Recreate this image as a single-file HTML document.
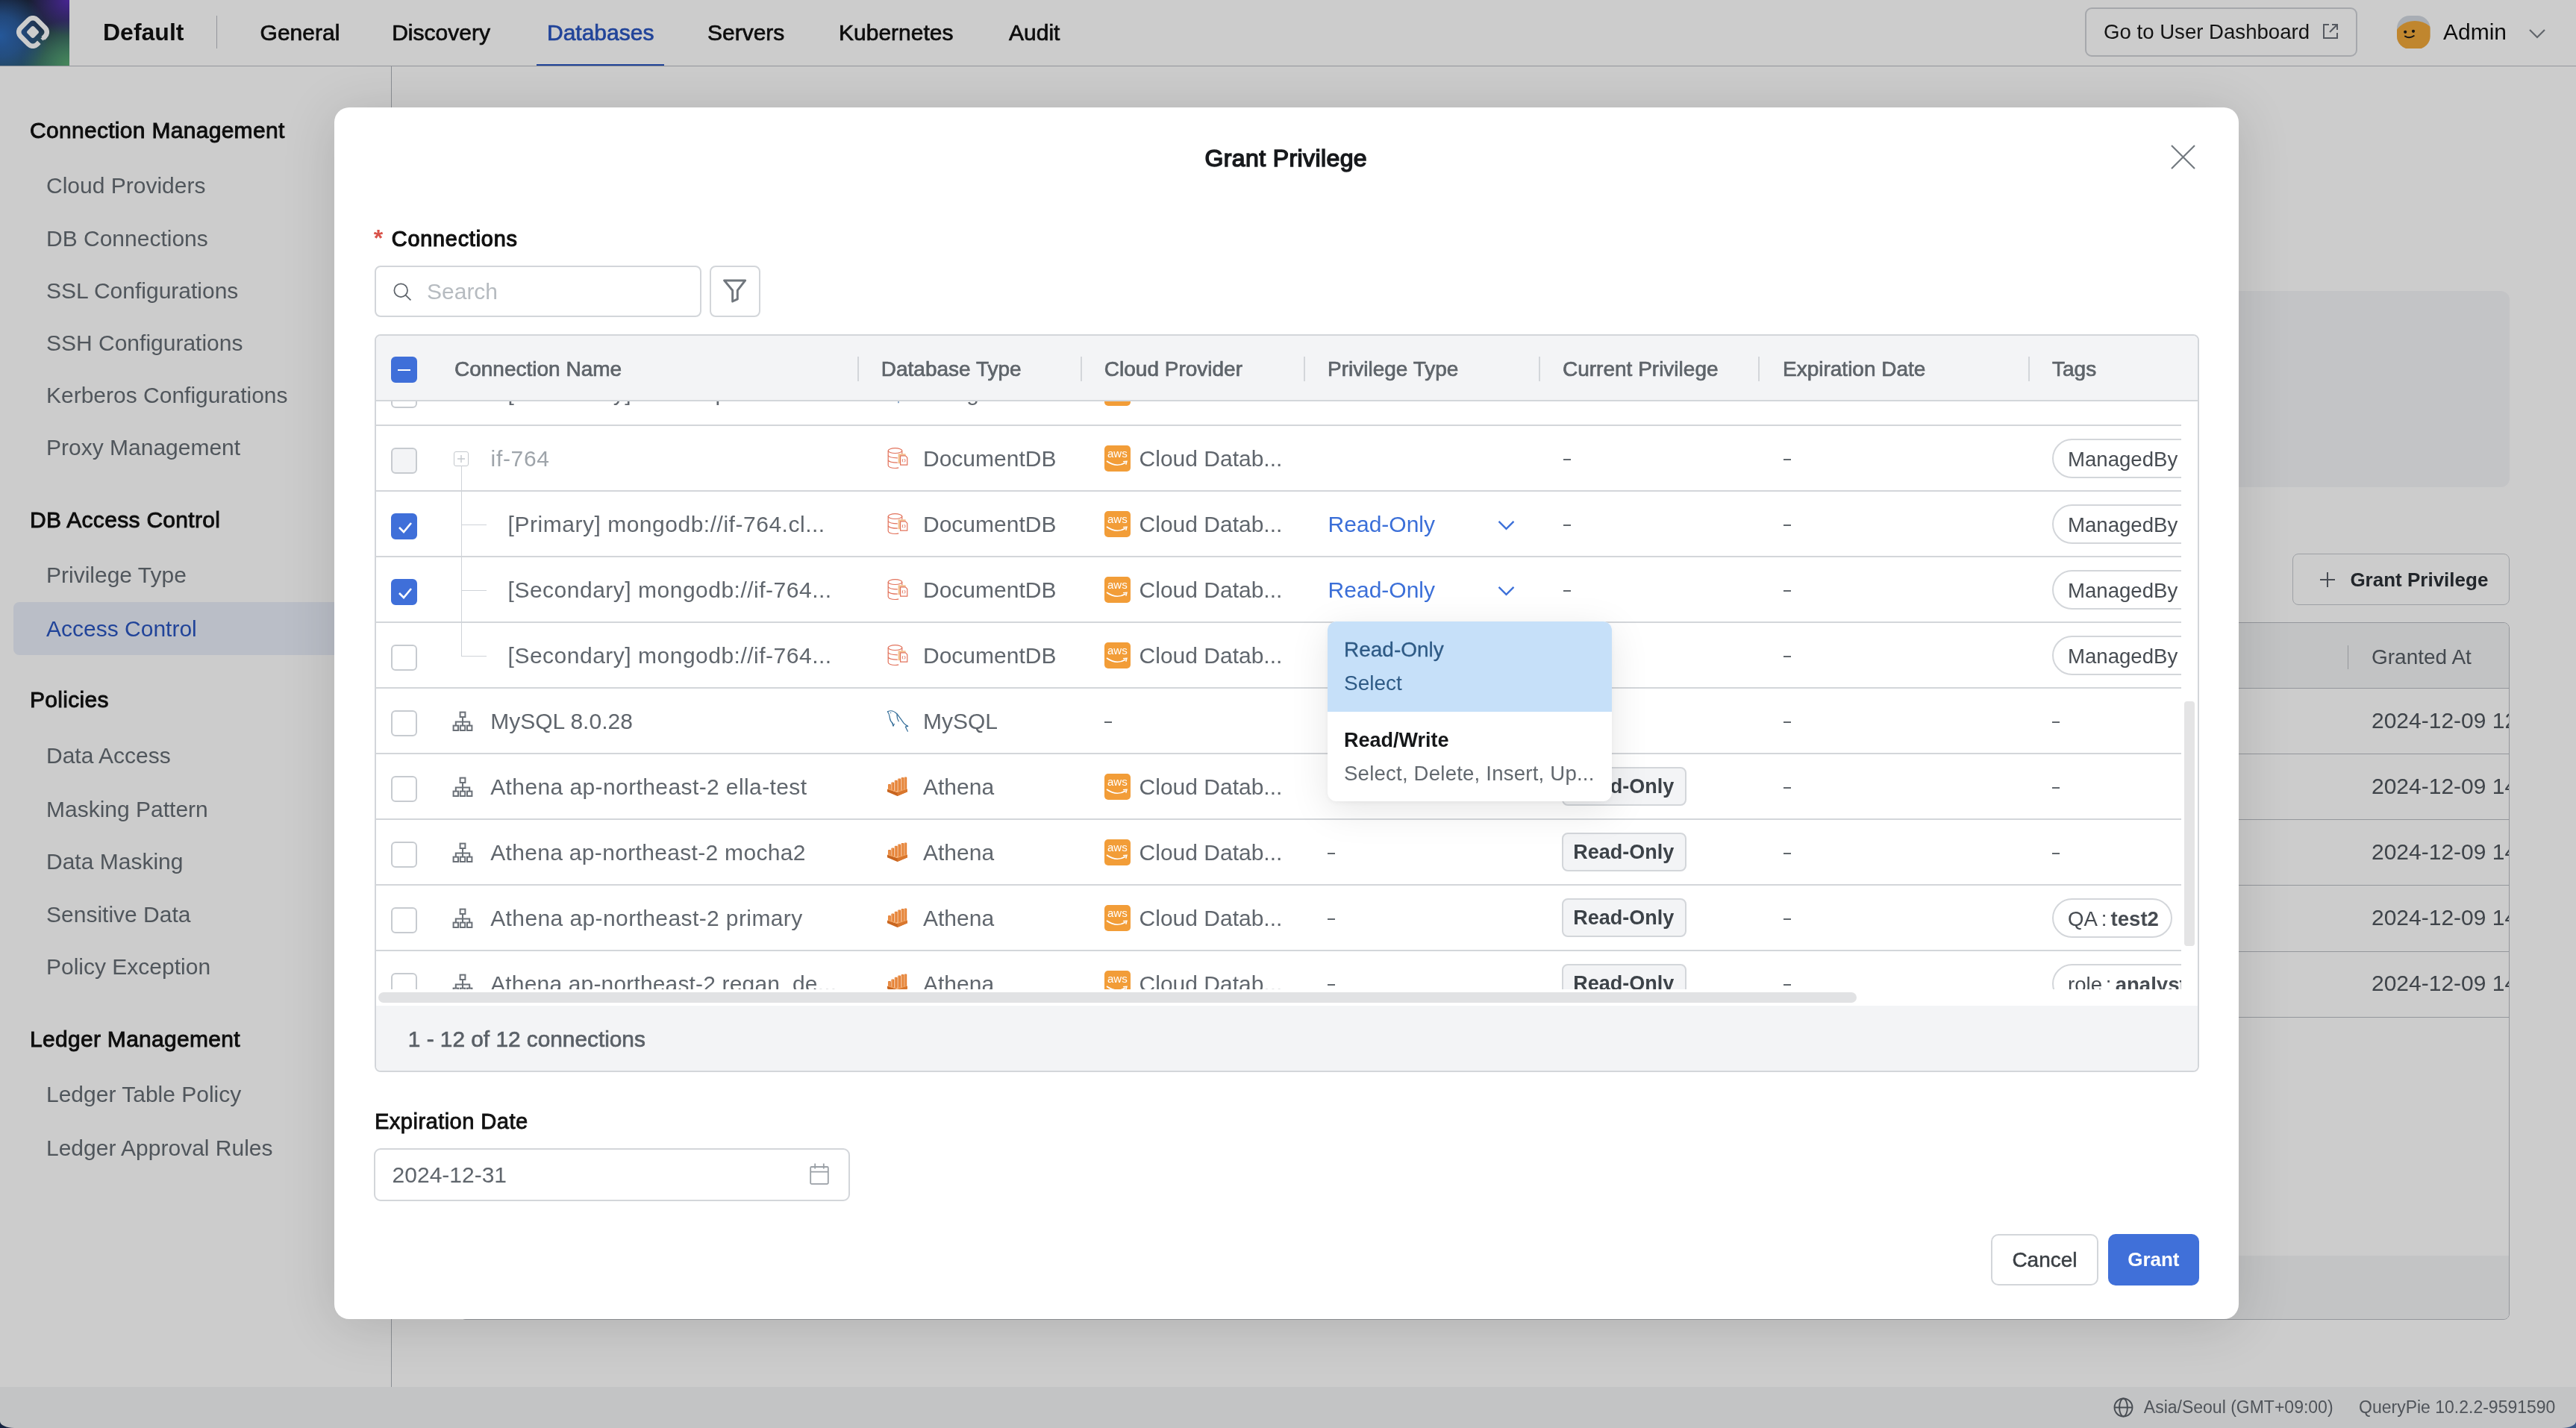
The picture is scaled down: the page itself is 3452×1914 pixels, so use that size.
<!DOCTYPE html>
<html><head><meta charset="utf-8"><title>Grant Privilege</title>
<style>
html{zoom:2}
*{box-sizing:border-box}
body{margin:0;width:1726px;height:957px;overflow:hidden;position:relative;font-family:"Liberation Sans",sans-serif;background:#fff;color:#111}
.abs{position:absolute}
.t{position:absolute;white-space:nowrap;line-height:1}
/* nav */
.nav{position:absolute;z-index:1;left:0;top:0;width:1726px;height:44.5px;border-bottom:0.5px solid #b8bcc4;background:#fff}
.logo{position:absolute;left:0;top:0;width:46.5px;height:44px;background:radial-gradient(ellipse 60% 55% at 100% 0%,#5a2fb8 0%,rgba(90,47,184,0.6) 40%,transparent 100%),radial-gradient(ellipse 70% 70% at 0% 55%,#2f6ec0 0%,rgba(47,110,192,0.7) 45%,transparent 100%),radial-gradient(ellipse 70% 70% at 100% 100%,#5aaa72 0%,rgba(90,170,114,0.6) 40%,transparent 100%),linear-gradient(160deg,#1a2238 0%,#253246 45%,#2f6a70 100%)}
.navi{position:absolute;top:13.5px;font-size:15px;color:#111;line-height:17px;-webkit-text-stroke:0.35px currentColor}
/* sidebar */
.side{position:absolute;left:0;top:0;width:262.5px;height:929.5px;border-right:0.5px solid #aeb3ba;background:#fff}
.sh{position:absolute;left:20px;font-size:15px;color:#111;letter-spacing:0.15px;-webkit-text-stroke:0.45px #111;line-height:17px}
.si{position:absolute;left:31px;font-size:15px;color:#656c73;line-height:17px}
/* status */
.status{position:absolute;left:0;top:929.5px;width:1726px;height:27.5px;background:#f4f5f7}
.bgd{left:1280.5px;font-size:15px;color:#4f565d}
.overlay{position:absolute;z-index:2;left:0;top:0;width:1726px;height:957px;background:rgba(0,0,0,0.2)}
/* modal */
.modal{position:absolute;z-index:3;left:224px;top:72px;width:1276px;height:812px;background:#fff;border-radius:10px;box-shadow:0 4px 36px rgba(0,0,0,0.14)}
.tbl{left:27px;top:152px;width:1222.5px;height:494.5px;border:1px solid #d3d6da;border-radius:4px;overflow:hidden}
.cbx{width:17.5px;height:17.5px;border:1px solid #c7cbd0;border-radius:3px;background:#fff}
.cbx.on{background:#3f6fd9;border-color:#3f6fd9}
.th{top:16.6px;font-size:14px;color:#5e646a;-webkit-text-stroke:0.35px #5e646a}
.dv{top:14.8px;width:1px;height:16.5px;background:#d3d6da}
.body{left:0;top:45px;width:1210.5px;height:394px;overflow:hidden}
.row{left:0;width:1210.5px;height:44px;border-bottom:1px solid #d3d6da}
.rt{font-size:15px;color:#60666d}
.blue{color:#3b6fd8}
.aws{left:488.9px;top:13px;width:17.5px;height:17.3px;border-radius:2.5px;background:#f29d38}
.pill{top:8.6px;width:100px;height:26.5px;border:1px solid #d3d6da;border-radius:13.25px;background:#fff}
.pill .t{font-size:13.8px;color:#474c52;left:9.7px !important;top:5.9px !important}
.badge{left:795.5px;top:8.7px;width:83.5px;height:26px;border:1px solid #d3d6da;border-radius:4px;background:#f3f4f6}
.badge .t{font-size:13.5px;font-weight:bold;color:#3c4248}
.dd{left:665.5px;top:344.5px;width:190.5px;height:120.5px;background:#fff;border-radius:6px;overflow:hidden;box-shadow:0 6px 26px rgba(0,0,0,0.10),0 1px 4px rgba(0,0,0,0.05)}
.modal,.side,.nav,.status,.bgc{will-change:transform}
.dash{top:21.8px;width:4.9px;height:1.35px;background:#62686e}
</style></head>
<body>
<!-- background page -->
<div class="nav">
  <div class="logo"><svg class="abs" style="left:10.9px;top:10.45px" width="22" height="22" viewBox="0 0 44 44"><defs><mask id="qm"><rect x="-5" y="-5" width="54" height="54" fill="#fff"/><path d="M27 39 L39 27" stroke="#000" stroke-width="0" /><path d="M26 26 L42 42" stroke="#000" stroke-width="7.5"/></mask></defs><g mask="url(#qm)"><rect x="6.36" y="6.36" width="31.28" height="31.28" rx="8" transform="rotate(45 22 22)" fill="none" stroke="#fff" stroke-width="6.6"/></g><path d="M38.2 26.4 L40.2 28.4 L35.6 33.6 L32.4 30.4Z" fill="#fff"/><rect x="15.6" y="15.6" width="12.8" height="12.8" rx="3" transform="rotate(45 22 22)" fill="#fff"/></svg></div>
  <div class="t" style="left:69px;top:13.6px;font-size:16px;font-weight:bold;color:#111">Default</div>
  <div class="abs" style="left:144.8px;top:10.5px;width:0.5px;height:22px;background:#b8bcc4"></div>
  <div class="t navi" style="left:174.3px">General</div>
  <div class="t navi" style="left:262.6px">Discovery</div>
  <div class="t navi" style="left:366.5px;color:#2a55c0">Databases</div>
  <div class="abs" style="left:359.5px;top:42.9px;width:85.5px;height:1.3px;background:#2a55c0"></div>
  <div class="t navi" style="left:474px">Servers</div>
  <div class="t navi" style="left:562px">Kubernetes</div>
  <div class="t navi" style="left:676px">Audit</div>
  <div class="abs" style="left:1397px;top:5px;width:182.5px;height:32.8px;border:1px solid #d0d3d8;border-radius:4.5px"></div>
  <div class="t" style="left:1409.5px;top:14.3px;font-size:13.8px;color:#1a1a1a">Go to User Dashboard</div>
  <svg class="abs" style="left:1555.5px;top:15px" width="12" height="12" viewBox="0 0 12 12"><path d="M5 1.5H1.5v9h9V7" fill="none" stroke="#6b7078" stroke-width="1"/><path d="M7 1.5h3.5V5M10.5 1.5L5.5 6.5" fill="none" stroke="#6b7078" stroke-width="1"/></svg>
  <svg class="abs" style="left:1606px;top:10.3px" width="22.3" height="22.3" viewBox="0 0 22.3 22.3"><defs><clipPath id="avc"><rect width="22.3" height="22.3" rx="8.5"/></clipPath></defs><g clip-path="url(#avc)"><rect width="22.3" height="22.3" fill="#d3d9e1"/><ellipse cx="12" cy="15.6" rx="14" ry="12.1" fill="#f1a83a"/><circle cx="5.6" cy="10.9" r="1.05" fill="#1a1a1a"/><circle cx="11" cy="10.4" r="1.05" fill="#1a1a1a"/><path d="M5.5 13.8Q8.4 15.6 11.4 13.5" fill="none" stroke="#1a1a1a" stroke-width="0.95" stroke-linecap="round"/></g></svg>
  <div class="t" style="left:1637px;top:14.2px;font-size:15px;color:#111">Admin</div>
  <svg class="abs" style="left:1694px;top:19px" width="12" height="7" viewBox="0 0 12 7"><path d="M1 1l5 5 5-5" fill="none" stroke="#7a8087" stroke-width="1.1"/></svg>
</div>
<div class="side">
  <div class="t sh" style="top:78.75px">Connection Management</div>
  <div class="t si" style="top:116.24px">Cloud Providers</div>
  <div class="t si" style="top:151.3px">DB Connections</div>
  <div class="t si" style="top:186.4px">SSL Configurations</div>
  <div class="t si" style="top:221.5px">SSH Configurations</div>
  <div class="t si" style="top:256.6px">Kerberos Configurations</div>
  <div class="t si" style="top:291.7px">Proxy Management</div>
  <div class="t sh" style="top:340.05px">DB Access Control</div>
  <div class="t si" style="top:377.2px">Privilege Type</div>
  <div class="abs" style="left:9px;top:403.5px;width:245px;height:35.5px;border-radius:4px;background:#e9eef9"></div>
  <div class="t si" style="top:412.9px;color:#2a55c0">Access Control</div>
  <div class="t sh" style="top:460.6px">Policies</div>
  <div class="t si" style="top:498.1px">Data Access</div>
  <div class="t si" style="top:533.8px">Masking Pattern</div>
  <div class="t si" style="top:568.8px">Data Masking</div>
  <div class="t si" style="top:604.4px">Sensitive Data</div>
  <div class="t si" style="top:639.3px">Policy Exception</div>
  <div class="t sh" style="top:687.9px">Ledger Management</div>
  <div class="t si" style="top:724.8px">Ledger Table Policy</div>
  <div class="t si" style="top:760.8px">Ledger Approval Rules</div>
</div>
<div class="abs bgc" style="left:0;top:0;width:1726px;height:957px">
<div class="abs" style="left:1050px;top:195px;width:631.5px;height:131.5px;border-radius:6px;background:#f4f5f8"></div>
<div class="abs" style="left:1536px;top:371px;width:145.5px;height:34.5px;border:0.5px solid #c5c9cf;border-radius:4px"></div>
<svg class="abs" style="left:1554px;top:383px" width="11" height="11" viewBox="0 0 11 11"><path d="M5.5 0.5v10M0.5 5.5h10" stroke="#5a6068" stroke-width="1"/></svg>
<div class="t" style="left:1574.7px;top:382px;font-size:13px;font-weight:bold;color:#2b3036">Grant Privilege</div>
<div class="abs" style="left:308px;top:417px;width:1373.5px;height:467.5px;border:0.5px solid #b9bdc4;border-radius:4px;overflow:hidden">
  <div class="abs" style="left:0;top:0;width:1400px;height:44px;background:#f3f4f6;border-bottom:0.5px solid #b9bdc4"></div>
  <div class="abs" style="left:1264.5px;top:15px;width:0.5px;height:16px;background:#b9bdc4"></div>
  <div class="t" style="left:1280.5px;top:16.2px;font-size:14px;color:#555c63">Granted At</div>
  <div class="abs" style="left:0;top:87.4px;width:1400px;height:0.5px;background:#b9bdc4"></div>
  <div class="abs" style="left:0;top:131.7px;width:1400px;height:0.5px;background:#b9bdc4"></div>
  <div class="abs" style="left:0;top:175.7px;width:1400px;height:0.5px;background:#b9bdc4"></div>
  <div class="abs" style="left:0;top:219.9px;width:1400px;height:0.5px;background:#b9bdc4"></div>
  <div class="abs" style="left:0;top:263.9px;width:1400px;height:0.5px;background:#b9bdc4"></div>
  <div class="t bgd" style="top:58.1px">2024-12-09 12:31</div>
  <div class="t bgd" style="top:102.1px">2024-12-09 14:02</div>
  <div class="t bgd" style="top:146.1px">2024-12-09 14:02</div>
  <div class="t bgd" style="top:190.1px">2024-12-09 14:02</div>
  <div class="t bgd" style="top:234.1px">2024-12-09 14:02</div>
  <div class="abs" style="left:0;top:423.8px;width:1400px;height:44px;background:#f4f5f7"></div>
</div>
</div>
<div class="status">
  <svg class="abs" style="left:1416px;top:7.2px" width="13.5" height="13.5" viewBox="0 0 14 14"><g fill="none" stroke="#5b6168" stroke-width="1"><circle cx="7" cy="7" r="6.2"/><ellipse cx="7" cy="7" rx="2.8" ry="6.2"/><path d="M0.8 7h12.4"/></g></svg>
  <div class="t" style="left:1436.4px;top:8.1px;font-size:11.5px;color:#646a71">Asia/Seoul (GMT+09:00)</div>
  <div class="t" style="left:1580.5px;top:8.1px;font-size:11.5px;color:#646a71">QueryPie 10.2.2-9591590</div>
</div>
<div class="overlay"></div>
<div class="modal">
  <div class="t" style="left:583.2px;top:26px;font-size:16px;letter-spacing:0.2px;-webkit-text-stroke:0.75px #17191c;color:#17191c">Grant Privilege</div>
  <svg class="abs" style="left:1230.5px;top:24.8px" width="16.5" height="16.5" viewBox="0 0 16.5 16.5"><path d="M0.5 0.5l15.5 15.5M16 0.5L0.5 16" stroke="#737a80" stroke-width="1.1"/></svg>
  <div class="t" style="left:26.4px;top:79.3px;font-size:16px;font-weight:bold;color:#d9534a">*</div>
  <div class="t" style="left:38.4px;top:81px;font-size:14.4px;color:#111;letter-spacing:0.4px;-webkit-text-stroke:0.6px #111">Connections</div>
  <div class="abs" style="left:27px;top:106px;width:219px;height:34.5px;border:1px solid #d3d6da;border-radius:4px"></div>
  <svg class="abs" style="left:39.5px;top:117.3px" width="12.5" height="12.5" viewBox="0 0 13 13"><circle cx="5.3" cy="5.3" r="4.6" fill="none" stroke="#5d636a" stroke-width="0.9"/><path d="M8.6 8.6l3.6 3.6" stroke="#5d636a" stroke-width="0.9"/></svg>
  <div class="t" style="left:62px;top:116.2px;font-size:15px;color:#b6bbc0">Search</div>
  <div class="abs" style="left:251.5px;top:106px;width:34px;height:34.5px;border:1px solid #d3d6da;border-radius:4px"></div>
  <svg class="abs" style="left:260.2px;top:114.6px" width="16.6" height="16.6" viewBox="0 0 17 17"><path d="M1.3 1.5h14.4L10.4 8.3v6l-3.4 1.6V8.3Z" fill="none" stroke="#70767d" stroke-width="1.5" stroke-linejoin="round"/></svg>
  <div class="abs tbl"><div class="abs" style="left:-1px;top:-1px;width:1222px;height:494.5px">
    <div class="abs" style="left:0;top:0;width:1223px;height:45px;background:#f3f4f6;border-bottom:1px solid #d3d6da"></div>
    <div class="abs cbx on" style="left:11px;top:15px"><div class="abs" style="left:3.5px;top:7.3px;width:8.5px;height:1.1px;background:#fff"></div></div>
    <div class="t th" style="left:53.5px">Connection Name</div>
    <div class="abs dv" style="left:323.6px"></div>
    <div class="t th" style="left:339.4px">Database Type</div>
    <div class="abs dv" style="left:473px"></div>
    <div class="t th" style="left:488.9px">Cloud Provider</div>
    <div class="abs dv" style="left:622.5px"></div>
    <div class="t th" style="left:638.5px">Privilege Type</div>
    <div class="abs dv" style="left:780.1px"></div>
    <div class="t th" style="left:796px">Current Privilege</div>
    <div class="abs dv" style="left:927.2px"></div>
    <div class="t th" style="left:943.5px">Expiration Date</div>
    <div class="abs dv" style="left:1107.8px"></div>
    <div class="t th" style="left:1124px">Tags</div>
    <div class="abs body">
      <div class="abs" style="left:0;top:-44.5px;width:1210.5px;height:500px">
<div class="abs row" style="top:17px"><div class="abs cbx" style="left:11.2px;top:14.7px"></div><div class="t rt" style="left:89.3px;top:14.5px;letter-spacing:0.25px">[Secondary] docs-replica-01.cl...</div><svg class="abs" style="left:344px;top:14px" width="14" height="15" viewBox="0 0 14 15"><path d="M7 0.8C9.6 3.4 10.4 6 9.6 8.8 9 10.8 8 12 7 12.8 6 12 5 10.8 4.4 8.8 3.6 6 4.4 3.4 7 0.8Z M7 12.8V14.6" fill="none" stroke="#5b84b1" stroke-width="0.7"/></svg><div class="t rt" style="left:367.5px;top:14.5px">MongoDB</div><div class="abs aws"><svg class="abs" style="left:0;top:0" width="17.5" height="17.3" viewBox="0 0 17.5 17.3"><text x="2" y="7.9" font-family="Liberation Sans" font-size="7.4" textLength="13.4" lengthAdjust="spacingAndGlyphs" fill="#fff">aws</text><path d="M1.5 10.5Q8 15.2 14.2 11.5" stroke="#fff" stroke-width="0.85" fill="none"/><path d="M12.5 10.8L15 10.6L14.4 12.9" stroke="#fff" stroke-width="0.7" fill="none"/></svg></div></div>
<div class="abs row" style="top:61px"><div class="abs cbx" style="left:11.2px;top:14.7px;background:#f3f4f6"></div><div class="abs" style="left:52.8px;top:17px;width:10.2px;height:10px;border:0.5px solid #c4c8cd;border-radius:1.5px"><svg class="abs" style="left:1.6px;top:1.5px" width="6" height="6" viewBox="0 0 6 6"><path d="M3 0.5v5M0.5 3h5" stroke="#c4c8cd" stroke-width="0.7"/></svg></div><div class="t rt" style="left:77.8px;top:14.5px;color:#9ea4aa;letter-spacing:0.33px">if-764</div><svg class="abs" style="left:343.5px;top:14.5px" width="15" height="15" viewBox="0 0 15 15"><g fill="none" stroke="#e2725b" stroke-width="0.6"><ellipse cx="5.26" cy="2.05" rx="4.65" ry="1.7"/><path d="M0.6 2.05V11.9C0.6 13 2.8 13.75 5.26 13.75C6.1 13.75 6.9 13.65 7.6 13.45"/><path d="M9.9 2.05V4.2"/><path d="M0.6 5.2Q1.2 6.9 6.9 6.9M0.6 8.4Q1.2 10.1 6.9 10.1"/></g><path d="M7.3 4.15H12.3V5.2H8.55V10.6H7.3Z" fill="#f3c08f"/><path d="M8.8 5.4H12.2L13.4 6.7V11.6H8.8Z" fill="#fff" stroke="#e2725b" stroke-width="0.6" stroke-linejoin="round"/><path d="M10.5 7.6Q9.8 8.6 10.5 9.7M11.7 7.6Q12.4 8.6 11.7 9.7" fill="none" stroke="#e2725b" stroke-width="0.5"/></svg><div class="t rt" style="left:367.5px;top:14.5px">DocumentDB</div><div class="abs aws"><svg class="abs" style="left:0;top:0" width="17.5" height="17.3" viewBox="0 0 17.5 17.3"><text x="2" y="7.9" font-family="Liberation Sans" font-size="7.4" textLength="13.4" lengthAdjust="spacingAndGlyphs" fill="#fff">aws</text><path d="M1.5 10.5Q8 15.2 14.2 11.5" stroke="#fff" stroke-width="0.85" fill="none"/><path d="M12.5 10.8L15 10.6L14.4 12.9" stroke="#fff" stroke-width="0.7" fill="none"/></svg></div><div class="t rt" style="left:512.3px;top:14.5px">Cloud Datab...</div><div class="abs dash" style="left:796.4px"></div><div class="abs dash" style="left:943.9px"></div><div class="abs pill" style="left:1123.8px"><span class="t" style="left:10.7px;top:7.2px">ManagedBy</span></div></div>
<div class="abs row" style="top:105px"><div class="abs cbx on" style="left:11.2px;top:14.7px"><svg class="abs" style="left:3.5px;top:4.5px" width="10" height="8" viewBox="0 0 10 8"><path d="M1 4l3 3 5-6" fill="none" stroke="#fff" stroke-width="1.3"/></svg></div><div class="abs" style="left:58px;top:21.8px;width:17px;height:0.5px;background:#cfd3d8"></div><div class="t rt" style="left:89.3px;top:14.5px;letter-spacing:0.26px">[Primary] mongodb://if-764.cl...</div><svg class="abs" style="left:343.5px;top:14.5px" width="15" height="15" viewBox="0 0 15 15"><g fill="none" stroke="#e2725b" stroke-width="0.6"><ellipse cx="5.26" cy="2.05" rx="4.65" ry="1.7"/><path d="M0.6 2.05V11.9C0.6 13 2.8 13.75 5.26 13.75C6.1 13.75 6.9 13.65 7.6 13.45"/><path d="M9.9 2.05V4.2"/><path d="M0.6 5.2Q1.2 6.9 6.9 6.9M0.6 8.4Q1.2 10.1 6.9 10.1"/></g><path d="M7.3 4.15H12.3V5.2H8.55V10.6H7.3Z" fill="#f3c08f"/><path d="M8.8 5.4H12.2L13.4 6.7V11.6H8.8Z" fill="#fff" stroke="#e2725b" stroke-width="0.6" stroke-linejoin="round"/><path d="M10.5 7.6Q9.8 8.6 10.5 9.7M11.7 7.6Q12.4 8.6 11.7 9.7" fill="none" stroke="#e2725b" stroke-width="0.5"/></svg><div class="t rt" style="left:367.5px;top:14.5px">DocumentDB</div><div class="abs aws"><svg class="abs" style="left:0;top:0" width="17.5" height="17.3" viewBox="0 0 17.5 17.3"><text x="2" y="7.9" font-family="Liberation Sans" font-size="7.4" textLength="13.4" lengthAdjust="spacingAndGlyphs" fill="#fff">aws</text><path d="M1.5 10.5Q8 15.2 14.2 11.5" stroke="#fff" stroke-width="0.85" fill="none"/><path d="M12.5 10.8L15 10.6L14.4 12.9" stroke="#fff" stroke-width="0.7" fill="none"/></svg></div><div class="t rt" style="left:512.3px;top:14.5px">Cloud Datab...</div><div class="t rt blue" style="left:638.8px;top:14.5px">Read-Only</div><svg class="abs" style="left:752.5px;top:19.2px" width="11.5" height="7" viewBox="0 0 12 7"><path d="M0.8 0.8l5.2 5.2 5.2-5.2" fill="none" stroke="#3b6fd8" stroke-width="1.2"/></svg><div class="abs dash" style="left:796.4px"></div><div class="abs dash" style="left:943.9px"></div><div class="abs pill" style="left:1123.8px"><span class="t" style="left:10.7px;top:7.2px">ManagedBy</span></div></div>
<div class="abs row" style="top:149px"><div class="abs cbx on" style="left:11.2px;top:14.7px"><svg class="abs" style="left:3.5px;top:4.5px" width="10" height="8" viewBox="0 0 10 8"><path d="M1 4l3 3 5-6" fill="none" stroke="#fff" stroke-width="1.3"/></svg></div><div class="abs" style="left:58px;top:21.8px;width:17px;height:0.5px;background:#cfd3d8"></div><div class="t rt" style="left:89.3px;top:14.5px;letter-spacing:0.25px">[Secondary] mongodb://if-764...</div><svg class="abs" style="left:343.5px;top:14.5px" width="15" height="15" viewBox="0 0 15 15"><g fill="none" stroke="#e2725b" stroke-width="0.6"><ellipse cx="5.26" cy="2.05" rx="4.65" ry="1.7"/><path d="M0.6 2.05V11.9C0.6 13 2.8 13.75 5.26 13.75C6.1 13.75 6.9 13.65 7.6 13.45"/><path d="M9.9 2.05V4.2"/><path d="M0.6 5.2Q1.2 6.9 6.9 6.9M0.6 8.4Q1.2 10.1 6.9 10.1"/></g><path d="M7.3 4.15H12.3V5.2H8.55V10.6H7.3Z" fill="#f3c08f"/><path d="M8.8 5.4H12.2L13.4 6.7V11.6H8.8Z" fill="#fff" stroke="#e2725b" stroke-width="0.6" stroke-linejoin="round"/><path d="M10.5 7.6Q9.8 8.6 10.5 9.7M11.7 7.6Q12.4 8.6 11.7 9.7" fill="none" stroke="#e2725b" stroke-width="0.5"/></svg><div class="t rt" style="left:367.5px;top:14.5px">DocumentDB</div><div class="abs aws"><svg class="abs" style="left:0;top:0" width="17.5" height="17.3" viewBox="0 0 17.5 17.3"><text x="2" y="7.9" font-family="Liberation Sans" font-size="7.4" textLength="13.4" lengthAdjust="spacingAndGlyphs" fill="#fff">aws</text><path d="M1.5 10.5Q8 15.2 14.2 11.5" stroke="#fff" stroke-width="0.85" fill="none"/><path d="M12.5 10.8L15 10.6L14.4 12.9" stroke="#fff" stroke-width="0.7" fill="none"/></svg></div><div class="t rt" style="left:512.3px;top:14.5px">Cloud Datab...</div><div class="t rt blue" style="left:638.8px;top:14.5px">Read-Only</div><svg class="abs" style="left:752.5px;top:19.2px" width="11.5" height="7" viewBox="0 0 12 7"><path d="M0.8 0.8l5.2 5.2 5.2-5.2" fill="none" stroke="#3b6fd8" stroke-width="1.2"/></svg><div class="abs dash" style="left:796.4px"></div><div class="abs dash" style="left:943.9px"></div><div class="abs pill" style="left:1123.8px"><span class="t" style="left:10.7px;top:7.2px">ManagedBy</span></div></div>
<div class="abs row" style="top:193px"><div class="abs cbx" style="left:11.2px;top:14.7px"></div><div class="abs" style="left:58px;top:21.8px;width:17px;height:0.5px;background:#cfd3d8"></div><div class="t rt" style="left:89.3px;top:14.5px;letter-spacing:0.25px">[Secondary] mongodb://if-764...</div><svg class="abs" style="left:343.5px;top:14.5px" width="15" height="15" viewBox="0 0 15 15"><g fill="none" stroke="#e2725b" stroke-width="0.6"><ellipse cx="5.26" cy="2.05" rx="4.65" ry="1.7"/><path d="M0.6 2.05V11.9C0.6 13 2.8 13.75 5.26 13.75C6.1 13.75 6.9 13.65 7.6 13.45"/><path d="M9.9 2.05V4.2"/><path d="M0.6 5.2Q1.2 6.9 6.9 6.9M0.6 8.4Q1.2 10.1 6.9 10.1"/></g><path d="M7.3 4.15H12.3V5.2H8.55V10.6H7.3Z" fill="#f3c08f"/><path d="M8.8 5.4H12.2L13.4 6.7V11.6H8.8Z" fill="#fff" stroke="#e2725b" stroke-width="0.6" stroke-linejoin="round"/><path d="M10.5 7.6Q9.8 8.6 10.5 9.7M11.7 7.6Q12.4 8.6 11.7 9.7" fill="none" stroke="#e2725b" stroke-width="0.5"/></svg><div class="t rt" style="left:367.5px;top:14.5px">DocumentDB</div><div class="abs aws"><svg class="abs" style="left:0;top:0" width="17.5" height="17.3" viewBox="0 0 17.5 17.3"><text x="2" y="7.9" font-family="Liberation Sans" font-size="7.4" textLength="13.4" lengthAdjust="spacingAndGlyphs" fill="#fff">aws</text><path d="M1.5 10.5Q8 15.2 14.2 11.5" stroke="#fff" stroke-width="0.85" fill="none"/><path d="M12.5 10.8L15 10.6L14.4 12.9" stroke="#fff" stroke-width="0.7" fill="none"/></svg></div><div class="t rt" style="left:512.3px;top:14.5px">Cloud Datab...</div><div class="abs dash" style="left:943.9px"></div><div class="abs pill" style="left:1123.8px"><span class="t" style="left:10.7px;top:7.2px">ManagedBy</span></div></div>
<div class="abs row" style="top:237px"><div class="abs cbx" style="left:11.2px;top:14.7px"></div><svg class="abs" style="left:51.8px;top:15px" width="14" height="14" viewBox="0 0 14 14"><g fill="none" stroke="#6b7178" stroke-width="1"><rect x="5.3" y="0.8" width="3.4" height="3.2"/><rect x="0.8" y="9.8" width="3.2" height="3.2"/><rect x="5.4" y="9.8" width="3.2" height="3.2"/><rect x="10" y="9.8" width="3.2" height="3.2"/><path d="M7 4v3.2M2.4 9.8V7.2h9.2v2.6M7 7.2v2.6"/></g></svg><div class="t rt" style="left:77.6px;top:14.5px">MySQL 8.0.28</div><svg class="abs" style="left:343.5px;top:13.5px" width="15" height="16" viewBox="0 0 15 16"><g fill="none" stroke="#2f6a96" stroke-width="0.6" stroke-linejoin="round" stroke-linecap="round"><path d="M0.2 1.9Q3.6 0.3 6.6 3.6Q9 6.6 11 9.6Q12.2 11 13.8 11.7"/><path d="M13.8 11.7L12.2 12.1L13.7 15.1"/><path d="M0.2 1.9Q1.3 3.2 1.7 6.2Q2 8.4 3.7 9.8"/><path d="M3.3 9.5L4 11.6L4.6 10.2"/><path d="M6.6 3.6Q6.2 6 7.6 8.4"/></g><circle cx="2.3" cy="2.7" r="0.35" fill="#2f6a96"/></svg><div class="t rt" style="left:367.5px;top:14.5px">MySQL</div><div class="abs dash" style="left:488.9px"></div><div class="abs dash" style="left:943.9px"></div><div class="abs dash" style="left:1123.9px"></div></div>
<div class="abs row" style="top:281px"><div class="abs cbx" style="left:11.2px;top:14.7px"></div><svg class="abs" style="left:51.8px;top:15px" width="14" height="14" viewBox="0 0 14 14"><g fill="none" stroke="#6b7178" stroke-width="1"><rect x="5.3" y="0.8" width="3.4" height="3.2"/><rect x="0.8" y="9.8" width="3.2" height="3.2"/><rect x="5.4" y="9.8" width="3.2" height="3.2"/><rect x="10" y="9.8" width="3.2" height="3.2"/><path d="M7 4v3.2M2.4 9.8V7.2h9.2v2.6M7 7.2v2.6"/></g></svg><div class="t rt" style="left:77.6px;top:14.5px;letter-spacing:0.2px">Athena ap-northeast-2 ella-test</div><svg class="abs" style="left:343.4px;top:14px" width="14" height="15" viewBox="0 0 14 15"><g fill="#e37a2c"><rect x="0.5" y="6" width="1.9" height="4.4" rx="0.5"/><rect x="2.7" y="4.7" width="1.9" height="5.9" rx="0.5"/><rect x="4.9" y="3.4" width="1.9" height="7.4" rx="0.5"/><rect x="7.1" y="2.2" width="1.9" height="8.8" rx="0.5"/><rect x="9.3" y="1.5" width="1.9" height="9" rx="0.5"/><rect x="11.4" y="1.2" width="1.7" height="9" rx="0.5"/></g><g fill="#f0a565"><rect x="0.9" y="6.3" width="0.55" height="3.6"/><rect x="3.1" y="5" width="0.55" height="5.2"/><rect x="5.3" y="3.7" width="0.55" height="6.7"/><rect x="7.5" y="2.5" width="0.55" height="8.1"/><rect x="9.7" y="1.8" width="0.55" height="8.3"/><rect x="11.8" y="1.5" width="0.5" height="8.3"/></g><path d="M0 9.4L6.75 11.5L13.5 9.4L13.5 11.1L6.75 14L0 11.1Z" fill="#c8651f"/><path d="M0 9.4L6.75 11.5L13.5 9.4L12.6 9.1L6.75 10.8L0.9 9.1Z" fill="#f3a25c"/><path d="M6.75 11.5V14L13.5 11.1V9.4Z" fill="#d9772e"/></svg><div class="t rt" style="left:367.5px;top:14.5px">Athena</div><div class="abs aws"><svg class="abs" style="left:0;top:0" width="17.5" height="17.3" viewBox="0 0 17.5 17.3"><text x="2" y="7.9" font-family="Liberation Sans" font-size="7.4" textLength="13.4" lengthAdjust="spacingAndGlyphs" fill="#fff">aws</text><path d="M1.5 10.5Q8 15.2 14.2 11.5" stroke="#fff" stroke-width="0.85" fill="none"/><path d="M12.5 10.8L15 10.6L14.4 12.9" stroke="#fff" stroke-width="0.7" fill="none"/></svg></div><div class="t rt" style="left:512.3px;top:14.5px">Cloud Datab...</div><div class="abs dash" style="left:638.7px"></div><div class="abs badge"><span class="t" style="left:6.6px;top:5.3px">Read-Only</span></div><div class="abs dash" style="left:943.9px"></div><div class="abs dash" style="left:1123.9px"></div></div>
<div class="abs row" style="top:325px"><div class="abs cbx" style="left:11.2px;top:14.7px"></div><svg class="abs" style="left:51.8px;top:15px" width="14" height="14" viewBox="0 0 14 14"><g fill="none" stroke="#6b7178" stroke-width="1"><rect x="5.3" y="0.8" width="3.4" height="3.2"/><rect x="0.8" y="9.8" width="3.2" height="3.2"/><rect x="5.4" y="9.8" width="3.2" height="3.2"/><rect x="10" y="9.8" width="3.2" height="3.2"/><path d="M7 4v3.2M2.4 9.8V7.2h9.2v2.6M7 7.2v2.6"/></g></svg><div class="t rt" style="left:77.6px;top:14.5px;letter-spacing:0.16px">Athena ap-northeast-2 mocha2</div><svg class="abs" style="left:343.4px;top:14px" width="14" height="15" viewBox="0 0 14 15"><g fill="#e37a2c"><rect x="0.5" y="6" width="1.9" height="4.4" rx="0.5"/><rect x="2.7" y="4.7" width="1.9" height="5.9" rx="0.5"/><rect x="4.9" y="3.4" width="1.9" height="7.4" rx="0.5"/><rect x="7.1" y="2.2" width="1.9" height="8.8" rx="0.5"/><rect x="9.3" y="1.5" width="1.9" height="9" rx="0.5"/><rect x="11.4" y="1.2" width="1.7" height="9" rx="0.5"/></g><g fill="#f0a565"><rect x="0.9" y="6.3" width="0.55" height="3.6"/><rect x="3.1" y="5" width="0.55" height="5.2"/><rect x="5.3" y="3.7" width="0.55" height="6.7"/><rect x="7.5" y="2.5" width="0.55" height="8.1"/><rect x="9.7" y="1.8" width="0.55" height="8.3"/><rect x="11.8" y="1.5" width="0.5" height="8.3"/></g><path d="M0 9.4L6.75 11.5L13.5 9.4L13.5 11.1L6.75 14L0 11.1Z" fill="#c8651f"/><path d="M0 9.4L6.75 11.5L13.5 9.4L12.6 9.1L6.75 10.8L0.9 9.1Z" fill="#f3a25c"/><path d="M6.75 11.5V14L13.5 11.1V9.4Z" fill="#d9772e"/></svg><div class="t rt" style="left:367.5px;top:14.5px">Athena</div><div class="abs aws"><svg class="abs" style="left:0;top:0" width="17.5" height="17.3" viewBox="0 0 17.5 17.3"><text x="2" y="7.9" font-family="Liberation Sans" font-size="7.4" textLength="13.4" lengthAdjust="spacingAndGlyphs" fill="#fff">aws</text><path d="M1.5 10.5Q8 15.2 14.2 11.5" stroke="#fff" stroke-width="0.85" fill="none"/><path d="M12.5 10.8L15 10.6L14.4 12.9" stroke="#fff" stroke-width="0.7" fill="none"/></svg></div><div class="t rt" style="left:512.3px;top:14.5px">Cloud Datab...</div><div class="abs dash" style="left:638.7px"></div><div class="abs badge"><span class="t" style="left:6.6px;top:5.3px">Read-Only</span></div><div class="abs dash" style="left:943.9px"></div><div class="abs dash" style="left:1123.9px"></div></div>
<div class="abs row" style="top:369px"><div class="abs cbx" style="left:11.2px;top:14.7px"></div><svg class="abs" style="left:51.8px;top:15px" width="14" height="14" viewBox="0 0 14 14"><g fill="none" stroke="#6b7178" stroke-width="1"><rect x="5.3" y="0.8" width="3.4" height="3.2"/><rect x="0.8" y="9.8" width="3.2" height="3.2"/><rect x="5.4" y="9.8" width="3.2" height="3.2"/><rect x="10" y="9.8" width="3.2" height="3.2"/><path d="M7 4v3.2M2.4 9.8V7.2h9.2v2.6M7 7.2v2.6"/></g></svg><div class="t rt" style="left:77.6px;top:14.5px;letter-spacing:0.2px">Athena ap-northeast-2 primary</div><svg class="abs" style="left:343.4px;top:14px" width="14" height="15" viewBox="0 0 14 15"><g fill="#e37a2c"><rect x="0.5" y="6" width="1.9" height="4.4" rx="0.5"/><rect x="2.7" y="4.7" width="1.9" height="5.9" rx="0.5"/><rect x="4.9" y="3.4" width="1.9" height="7.4" rx="0.5"/><rect x="7.1" y="2.2" width="1.9" height="8.8" rx="0.5"/><rect x="9.3" y="1.5" width="1.9" height="9" rx="0.5"/><rect x="11.4" y="1.2" width="1.7" height="9" rx="0.5"/></g><g fill="#f0a565"><rect x="0.9" y="6.3" width="0.55" height="3.6"/><rect x="3.1" y="5" width="0.55" height="5.2"/><rect x="5.3" y="3.7" width="0.55" height="6.7"/><rect x="7.5" y="2.5" width="0.55" height="8.1"/><rect x="9.7" y="1.8" width="0.55" height="8.3"/><rect x="11.8" y="1.5" width="0.5" height="8.3"/></g><path d="M0 9.4L6.75 11.5L13.5 9.4L13.5 11.1L6.75 14L0 11.1Z" fill="#c8651f"/><path d="M0 9.4L6.75 11.5L13.5 9.4L12.6 9.1L6.75 10.8L0.9 9.1Z" fill="#f3a25c"/><path d="M6.75 11.5V14L13.5 11.1V9.4Z" fill="#d9772e"/></svg><div class="t rt" style="left:367.5px;top:14.5px">Athena</div><div class="abs aws"><svg class="abs" style="left:0;top:0" width="17.5" height="17.3" viewBox="0 0 17.5 17.3"><text x="2" y="7.9" font-family="Liberation Sans" font-size="7.4" textLength="13.4" lengthAdjust="spacingAndGlyphs" fill="#fff">aws</text><path d="M1.5 10.5Q8 15.2 14.2 11.5" stroke="#fff" stroke-width="0.85" fill="none"/><path d="M12.5 10.8L15 10.6L14.4 12.9" stroke="#fff" stroke-width="0.7" fill="none"/></svg></div><div class="t rt" style="left:512.3px;top:14.5px">Cloud Datab...</div><div class="abs dash" style="left:638.7px"></div><div class="abs badge"><span class="t" style="left:6.6px;top:5.3px">Read-Only</span></div><div class="abs dash" style="left:943.9px"></div><div class="abs pill" style="left:1123.8px;width:80.5px"><span class="t" style="left:10.7px;top:7.2px">QA<span style="margin:0 2.6px 0 2.4px">:</span><b>test2</b></span></div></div>
<div class="abs row" style="top:413px"><div class="abs cbx" style="left:11.2px;top:14.7px"></div><svg class="abs" style="left:51.8px;top:15px" width="14" height="14" viewBox="0 0 14 14"><g fill="none" stroke="#6b7178" stroke-width="1"><rect x="5.3" y="0.8" width="3.4" height="3.2"/><rect x="0.8" y="9.8" width="3.2" height="3.2"/><rect x="5.4" y="9.8" width="3.2" height="3.2"/><rect x="10" y="9.8" width="3.2" height="3.2"/><path d="M7 4v3.2M2.4 9.8V7.2h9.2v2.6M7 7.2v2.6"/></g></svg><div class="t rt" style="left:77.6px;top:14.5px;letter-spacing:0.08px">Athena ap-northeast-2 regan_de...</div><svg class="abs" style="left:343.4px;top:14px" width="14" height="15" viewBox="0 0 14 15"><g fill="#e37a2c"><rect x="0.5" y="6" width="1.9" height="4.4" rx="0.5"/><rect x="2.7" y="4.7" width="1.9" height="5.9" rx="0.5"/><rect x="4.9" y="3.4" width="1.9" height="7.4" rx="0.5"/><rect x="7.1" y="2.2" width="1.9" height="8.8" rx="0.5"/><rect x="9.3" y="1.5" width="1.9" height="9" rx="0.5"/><rect x="11.4" y="1.2" width="1.7" height="9" rx="0.5"/></g><g fill="#f0a565"><rect x="0.9" y="6.3" width="0.55" height="3.6"/><rect x="3.1" y="5" width="0.55" height="5.2"/><rect x="5.3" y="3.7" width="0.55" height="6.7"/><rect x="7.5" y="2.5" width="0.55" height="8.1"/><rect x="9.7" y="1.8" width="0.55" height="8.3"/><rect x="11.8" y="1.5" width="0.5" height="8.3"/></g><path d="M0 9.4L6.75 11.5L13.5 9.4L13.5 11.1L6.75 14L0 11.1Z" fill="#c8651f"/><path d="M0 9.4L6.75 11.5L13.5 9.4L12.6 9.1L6.75 10.8L0.9 9.1Z" fill="#f3a25c"/><path d="M6.75 11.5V14L13.5 11.1V9.4Z" fill="#d9772e"/></svg><div class="t rt" style="left:367.5px;top:14.5px">Athena</div><div class="abs aws"><svg class="abs" style="left:0;top:0" width="17.5" height="17.3" viewBox="0 0 17.5 17.3"><text x="2" y="7.9" font-family="Liberation Sans" font-size="7.4" textLength="13.4" lengthAdjust="spacingAndGlyphs" fill="#fff">aws</text><path d="M1.5 10.5Q8 15.2 14.2 11.5" stroke="#fff" stroke-width="0.85" fill="none"/><path d="M12.5 10.8L15 10.6L14.4 12.9" stroke="#fff" stroke-width="0.7" fill="none"/></svg></div><div class="t rt" style="left:512.3px;top:14.5px">Cloud Datab...</div><div class="abs dash" style="left:638.7px"></div><div class="abs badge"><span class="t" style="left:6.6px;top:5.3px">Read-Only</span></div><div class="abs dash" style="left:943.9px"></div><div class="abs pill" style="left:1123.8px"><span class="t" style="left:10.7px;top:7.2px">role<span style="margin:0 2.6px 0 2.4px">:</span><b>analyst</b></span></div></div>
        <div class="abs" style="left:58px;top:87.5px;width:0.5px;height:127.5px;background:#cfd3d8"></div>
      </div>
    </div>
    <div class="abs" style="left:2.5px;top:441px;width:990.5px;height:7px;border-radius:4px;background:#e1e2e4"></div>
    <div class="abs" style="left:1212.6px;top:245.8px;width:7px;height:164.4px;border-radius:2px;background:#e4e4e5"></div>
    <div class="abs" style="left:0;top:450px;width:1222px;height:44.5px;background:#f3f4f6"></div>
    <div class="t" style="left:22.4px;top:465.1px;font-size:14.9px;color:#5a6067;-webkit-text-stroke:0.35px #5a6067">1 - 12 of 12 connections</div>
  </div></div>
  <div class="t" style="left:27px;top:672.4px;font-size:14.6px;color:#111;-webkit-text-stroke:0.42px #111;letter-spacing:0.2px">Expiration Date</div>
  <div class="abs" style="left:26.5px;top:697.4px;width:319px;height:35.4px;border:1px solid #d3d6da;border-radius:4.5px"></div>
  <div class="t" style="left:38.8px;top:708px;font-size:15px;color:#5f656c">2024-12-31</div>
  <svg class="abs" style="left:318.3px;top:707.5px" width="13" height="14.5" viewBox="0 0 13 14.5"><g fill="none" stroke="#9aa0a6" stroke-width="0.9"><rect x="0.6" y="2.5" width="11.8" height="11.4" rx="0.6"/><path d="M0.6 5.8h11.8M3.6 0.3v3.4M9.4 0.3v3.4"/></g></svg>
  <div class="abs" style="left:1109.8px;top:755.2px;width:72px;height:34.5px;border:1px solid #d3d6da;border-radius:5px"></div>
  <div class="t" style="left:1124.2px;top:765.6px;font-size:14px;color:#3a3f44;-webkit-text-stroke:0.25px #3a3f44">Cancel</div>
  <div class="abs" style="left:1188.5px;top:755.2px;width:61px;height:34.5px;border-radius:5px;background:#4070d9"></div>
  <div class="t" style="left:1201.6px;top:765.4px;font-size:13px;font-weight:bold;color:#fff">Grant</div>
  <div class="abs dd">
    <div class="abs" style="left:0;top:0;width:190.5px;height:60.5px;background:#c6e0f9"></div>
    <div class="t" style="left:11px;top:11.85px;font-size:14px;color:#2e5a85;-webkit-text-stroke:0.15px #2e5a85">Read-Only</div>
    <div class="t" style="left:11px;top:34.3px;font-size:14px;color:#2e5a85">Select</div>
    <div class="t" style="left:11px;top:72.8px;font-size:13.5px;font-weight:bold;color:#151719">Read/Write</div>
    <div class="t" style="left:11px;top:94.8px;font-size:13.8px;letter-spacing:0.1px;color:#62686e">Select, Delete, Insert, Up...</div>
  </div>
</div>
<svg class="abs" style="left:0;top:952.5px;z-index:5" width="9.5" height="4.5" viewBox="0 0 9.5 4.5"><path d="M0 0A9.5 4.5 0 0 0 9.5 4.5L0 4.5Z" fill="#142240"/></svg>
<svg class="abs" style="left:1716.5px;top:952.5px;z-index:5" width="9.5" height="4.5" viewBox="0 0 9.5 4.5"><path d="M9.5 0A9.5 4.5 0 0 1 0 4.5L9.5 4.5Z" fill="#3b5688"/></svg>
</body></html>
